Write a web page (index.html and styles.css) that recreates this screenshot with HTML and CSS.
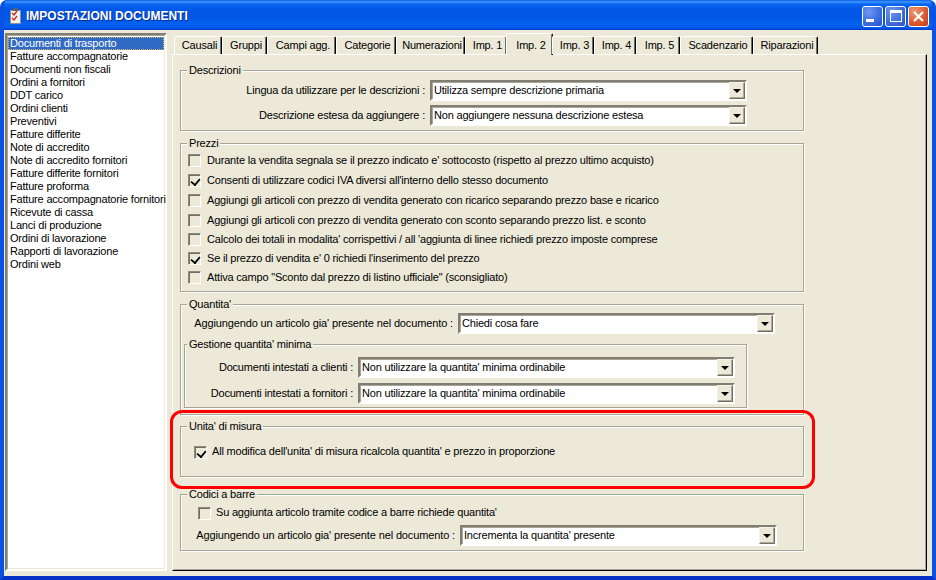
FILE: index.html
```html
<!DOCTYPE html>
<html lang="it">
<head>
<meta charset="utf-8">
<title>Impostazioni documenti</title>
<link rel="stylesheet" href="styles.css">
</head>
<body>
<div class="window">
  <header class="titlebar">
    <svg class="app-icon" width="16" height="16" viewBox="0 0 16 16">
      <rect x="2" y="2" width="11" height="14" fill="#8c8f98"/>
      <rect x="3" y="3" width="9" height="12" fill="#f4f4ee"/>
      <rect x="5" y="0" width="5" height="3" fill="#5e6068"/>
      <path d="M4 5l2 2 3-4M4 10l2 2 3-4" fill="none" stroke="#d8261c" stroke-width="1.4"/>
    </svg>
    <span class="title-text">IMPOSTAZIONI DOCUMENTI</span>
    <div class="controls">
      <span class="ctl ctl-blue"><i class="min-glyph"></i></span>
      <span class="ctl ctl-blue"><i class="max-glyph"></i></span>
      <span class="ctl ctl-red">
        <svg width="13" height="13" viewBox="0 0 13 13"><path d="M2 2l9 9M11 2l-9 9" stroke="#fff" stroke-width="2.2" fill="none"/></svg>
      </span>
    </div>
  </header>
  <div class="client">
    <ul class="list">
      <li class="selected">Documenti di trasporto</li>
      <li>Fatture accompagnatorie</li>
      <li>Documenti non fiscali</li>
      <li>Ordini a fornitori</li>
      <li>DDT carico</li>
      <li>Ordini clienti</li>
      <li>Preventivi</li>
      <li>Fatture differite</li>
      <li>Note di accredito</li>
      <li>Note di accredito fornitori</li>
      <li>Fatture differite fornitori</li>
      <li>Fatture proforma</li>
      <li>Fatture accompagnatorie fornitori</li>
      <li>Ricevute di cassa</li>
      <li>Lanci di produzione</li>
      <li>Ordini di lavorazione</li>
      <li>Rapporti di lavorazione</li>
      <li>Ordini web</li>
    </ul>
    <div class="tabs-area">
      <nav class="tabs">
        <span class="tab">Causali</span>
        <span class="tab">Gruppi</span>
        <span class="tab">Campi agg.</span>
        <span class="tab">Categorie</span>
        <span class="tab">Numerazioni</span>
        <span class="tab">Imp. 1</span>
        <span class="tab active">Imp. 2</span>
        <span class="tab">Imp. 3</span>
        <span class="tab">Imp. 4</span>
        <span class="tab">Imp. 5</span>
        <span class="tab">Scadenzario</span>
        <span class="tab">Riparazioni</span>
      </nav>
      <main class="page">
        <section class="group g-desc">
          <span class="legend">Descrizioni</span>
          <div class="field f-desc1">
            <label class="field-label">Lingua da utilizzare per le descrizioni :</label>
            <div class="combo c316"><span class="combo-text">Utilizza sempre descrizione primaria</span><span class="combo-btn"><i></i></span></div>
          </div>
          <div class="field f-desc2">
            <label class="field-label">Descrizione estesa da aggiungere :</label>
            <div class="combo c316"><span class="combo-text">Non aggiungere nessuna descrizione estesa</span><span class="combo-btn"><i></i></span></div>
          </div>
        </section>
        <section class="group g-prezzi">
          <span class="legend">Prezzi</span>
          <div class="check r20"><span class="box"></span><span>Durante la vendita segnala se il prezzo indicato e' sottocosto (rispetto al prezzo ultimo acquisto)</span></div>
          <div class="check r20"><span class="box on"></span><span>Consenti di utilizzare codici IVA diversi all'interno dello stesso documento</span></div>
          <div class="check r20"><span class="box"></span><span>Aggiungi gli articoli con prezzo di vendita generato con ricarico separando prezzo base e ricarico</span></div>
          <div class="check r19"><span class="box"></span><span>Aggiungi gli articoli con prezzo di vendita generato con sconto separando prezzo list. e sconto</span></div>
          <div class="check r19"><span class="box"></span><span>Calcolo dei totali in modalita' corrispettivi / all 'aggiunta di linee richiedi prezzo imposte comprese</span></div>
          <div class="check r19"><span class="box on"></span><span>Se il prezzo di vendita e' 0 richiedi l'inserimento del prezzo</span></div>
          <div class="check r19"><span class="box"></span><span>Attiva campo "Sconto dal prezzo di listino ufficiale" (sconsigliato)</span></div>
        </section>
        <section class="group g-quant">
          <span class="legend">Quantita'</span>
          <div class="field f-quant">
            <label class="field-label">Aggiungendo un articolo gia' presente nel documento :</label>
            <div class="combo c316"><span class="combo-text">Chiedi cosa fare</span><span class="combo-btn"><i></i></span></div>
          </div>
          <section class="group g-min">
            <span class="legend">Gestione quantita' minima</span>
            <div class="field f-min1">
              <label class="field-label">Documenti intestati a clienti :</label>
              <div class="combo c376"><span class="combo-text">Non utilizzare la quantita' minima ordinabile</span><span class="combo-btn"><i></i></span></div>
            </div>
            <div class="field f-min2">
              <label class="field-label">Documenti intestati a fornitori :</label>
              <div class="combo c376"><span class="combo-text">Non utilizzare la quantita' minima ordinabile</span><span class="combo-btn"><i></i></span></div>
            </div>
          </section>
        </section>
        <section class="group g-unita">
          <span class="legend">Unita' di misura</span>
          <div class="check c-unita"><span class="box on"></span><span>All modifica dell'unita' di misura ricalcola quantita' e prezzo in proporzione</span></div>
        </section>
        <section class="group g-codici">
          <span class="legend">Codici a barre</span>
          <div class="check c-codici"><span class="box"></span><span>Su aggiunta articolo tramite codice a barre richiede quantita'</span></div>
          <div class="field f-codici">
            <label class="field-label">Aggiungendo un articolo gia' presente nel documento :</label>
            <div class="combo c316"><span class="combo-text">Incrementa la quantita' presente</span><span class="combo-btn"><i></i></span></div>
          </div>
        </section>
      </main>
    </div>
    <div class="highlight-ring"></div>
  </div>
</div>
</body>
</html>
```

FILE: styles.css
```css
* { box-sizing: border-box; }
html, body { margin: 0; padding: 0; }
body {
  width: 936px;
  height: 580px;
  overflow: hidden;
  background: #fff;
  font: 11px/13px "Liberation Sans", Arial, sans-serif;
  letter-spacing: -0.19px;
  color: #000;
}
.window {
  width: 936px;
  height: 580px;
  display: flex;
  flex-direction: column;
  border-radius: 7px 7px 0 0;
  overflow: hidden;
  background: #0a4fe0;
  border-style: solid;
  border-width: 0 4px 4px 4px;
  border-color: #0a52e4;
  border-bottom-color: #0831c8;
}
.titlebar {
  flex: none;
  height: 30px;
  margin: 0 -4px;
  padding: 2px 7px 0 8px;
  display: flex;
  align-items: center;
  background: linear-gradient(180deg, #0a5fe8 0, #3f97ff 2px, #0a66f0 4px, #0058e6 9px, #0256e4 18px, #0463f0 25px, #0458e8 28px, #0037c4 30px);
}
.app-icon { flex: none; }
.title-text {
  margin-left: 2px;
  color: #fff;
  font-size: 12px;
  line-height: 16px;
  font-weight: bold;
  letter-spacing: 0;
  text-shadow: 1px 1px 0 #0b2a8f;
}
.controls { margin-left: auto; display: flex; gap: 2px; }
.ctl {
  width: 21px;
  height: 21px;
  border: 1px solid #fff;
  border-radius: 3px;
  display: flex;
  align-items: center;
  justify-content: center;
  position: relative;
}
.ctl-blue { background: radial-gradient(circle at 30% 25%, #6f97ef 0, #3e6fe0 55%, #2a4fc8 100%); }
.ctl-red { background: radial-gradient(circle at 30% 25%, #ef9a78 0, #dd5a30 55%, #c33a14 100%); }
.min-glyph { width: 8px; height: 3px; background: #fff; margin: 9px 5px 0 0; }
.max-glyph { width: 12px; height: 12px; border: 1px solid #fff; border-top-width: 3px; }

.client {
  flex: 1;
  min-height: 0;
  position: relative;
  display: flex;
  gap: 5px;
  padding: 3px 5px 5px 1px;
  background: #ece9d8;
}
.list {
  flex: none;
  width: 162px;
  margin: 0;
  padding: 2px 1px;
  list-style: none;
  background: #fff;
  border: 2px solid;
  border-color: #807e72 #fff #fff #807e72;
  box-shadow: inset 1px 1px 0 #a9a698, inset -1px -1px 0 #ece9d8;
}
.list li { height: 13px; padding-left: 2px; white-space: nowrap; }
.list li.selected { background: #316ac5; color: #fff; outline: 1px dotted #d9b75c; outline-offset: -1px; }

.tabs-area { flex: 1; min-width: 0; display: flex; flex-direction: column; }
.tabs {
  flex: none;
  height: 21px;
  padding: 3px 0 0 2px;
  display: grid;
  grid-template-columns: 48px 45px 69px 60px 69px 42px 45px 42px 42px 44px 73px 65px;
  justify-content: start;
  position: relative;
  z-index: 1;
}
.tab {
  height: 18px;
  padding-left: 3px;
  text-align: center;
  line-height: 17px;
  background: #ece9d8;
  border-top: 1px solid #fff;
  border-left: 1px solid #fff;
  border-right: 1px solid #000;
  box-shadow: inset -1px 0 0 #716f64;
  border-radius: 2px 2px 0 0;
  white-space: nowrap;
}
.tab.active {
  height: 22px;
  margin: -3px -1px 0 -1px;
  padding-top: 3px;
}
.page {
  flex: 1;
  min-height: 0;
  padding: 15px 0 0 7px;
  background: #ece9d8;
  border-top: 1px solid #fff;
  border-left: 1px solid #fff;
  border-right: 1px solid #000;
  border-bottom: 1px solid #000;
  display: flex;
  flex-direction: column;
  align-items: flex-start;
  box-shadow: inset -1px -1px 0 #a9a698;
  position: relative;
}
.group {
  position: relative;
  flex: none;
  width: 624px;
  border: 1px solid #a7a495;
  box-shadow: 1px 1px 0 #fff, inset 1px 1px 0 #fff;
}
.legend {
  position: absolute;
  top: -7px;
  left: 6px;
  padding: 0 2px;
  background: #ece9d8;
  white-space: nowrap;
}
.g-min > .legend { left: 2px; }
.g-desc { height: 61px; }
.g-prezzi { height: 149px; margin-top: 12px; padding: 7px 0 0 7px; }
.g-quant { height: 111px; margin-top: 12px; }
.g-min { width: 563px; height: 64px; margin: 39px 0 0 3px; }
.g-unita { height: 51px; margin-top: 11px; }
.g-codici { height: 57px; margin-top: 17px; }

.field { display: flex; align-items: center; height: 21px; }
.field-label { flex: none; text-align: right; white-space: nowrap; margin-right: 5px; }
.f-desc1 { margin-top: 9px; }
.f-desc2 { margin-top: 4px; }
.f-desc1 .field-label, .f-desc2 .field-label { width: 244px; }
.f-quant { position: absolute; top: 8px; left: 0; }
.f-quant .field-label { width: 272px; letter-spacing: -0.13px; }
.f-min1 { margin-top: 12px; }
.f-min2 { margin-top: 5px; }
.f-min1 .field-label, .f-min2 .field-label { width: 168px; }
.f-codici { margin-top: 2px; }
.f-codici .field-label { width: 274px; letter-spacing: -0.13px; }

.combo {
  flex: none;
  height: 21px;
  display: flex;
  background: #fff;
  border: 2px solid;
  border-color: #807e72 #fff #fff #807e72;
  box-shadow: inset 1px 1px 0 #a9a698;
  padding: 1px 1px 1px 2px;
}
.c316 { width: 317px; }
.c376 { width: 377px; }
.combo-text { flex: 1; line-height: 15px; white-space: nowrap; overflow: hidden; }
.combo-btn {
  flex: none;
  width: 16px;
  margin: -1px -1px -1px 0;
  background: #ece9d8;
  border: 1px solid;
  border-color: #f6f4ea #716f64 #716f64 #f6f4ea;
  box-shadow: inset -1px -1px 0 #aca899;
  display: flex;
  align-items: center;
  justify-content: center;
}
.combo-btn i {
  width: 0;
  height: 0;
  border-style: solid;
  border-width: 4px 4px 0 4px;
  border-color: #000 transparent transparent;
}

.check { display: flex; align-items: center; gap: 6px; white-space: nowrap; }
.r20 { height: 19px; margin-bottom: 1px; }
.r19 { height: 19px; }
.box {
  flex: none;
  width: 13px;
  height: 13px;
  background: #ece9d8;
  border: 1px solid;
  border-color: #8c8a7e #fff #fff #8c8a7e;
  box-shadow: inset 1px 1px 0 #716f64;
  position: relative;
}
.box.on::after {
  content: "";
  position: absolute;
  left: 2px;
  top: 1px;
  width: 5px;
  height: 8px;
  border: solid #000;
  border-width: 0 2px 2px 0;
  transform: translateX(1px) rotate(40deg) scale(.85);
}
.c-unita { margin: 16px 0 0 13px; height: 19px; gap: 5px; }
.c-codici { margin: 9px 0 0 17px; height: 19px; gap: 5px; }
.c-unita > span:last-child, .c-codici > span:last-child { margin-top: -2px; }

.highlight-ring {
  position: absolute;
  left: 166px;
  top: 380px;
  width: 645px;
  height: 79px;
  border: 3px solid #f00;
  border-radius: 12px;
  pointer-events: none;
}
```
